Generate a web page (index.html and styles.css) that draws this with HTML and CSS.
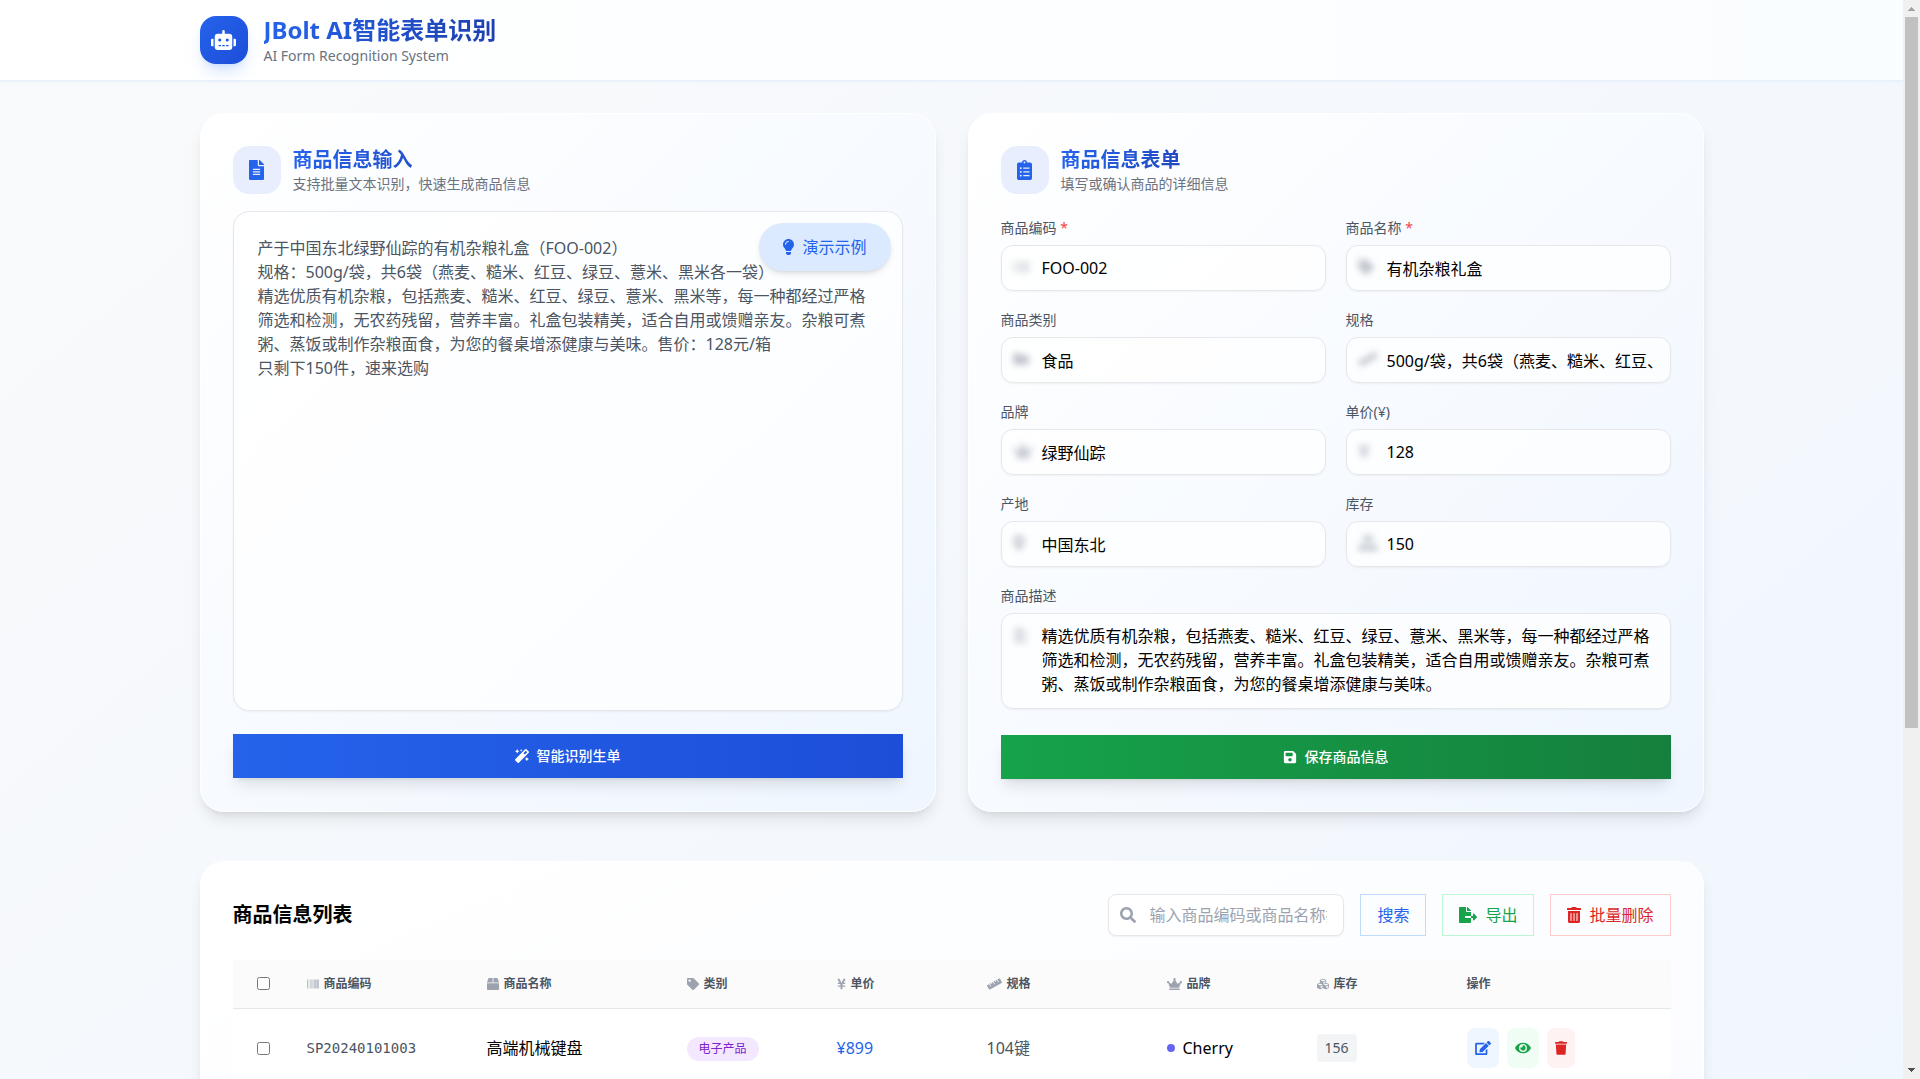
FILE: index.html
```html
<!DOCTYPE html>
<html lang="zh-CN">
<head>
<meta charset="UTF-8">
<meta name="viewport" content="width=device-width, initial-scale=1">
<title>JBolt AI智能表单识别</title>
<link rel="stylesheet" href="styles.css">
</head>
<body>
<svg class="sprite" aria-hidden="true">
  <symbol id="robot" viewBox="0 0 640 512"><path d="M32,224H64V416H32A31.96,31.96,0,0,1,0,384V256A31.96,31.96,0,0,1,32,224Zm512-48V448a64.06,64.06,0,0,1-64,64H160a64.06,64.06,0,0,1-64-64V176a79.974,79.974,0,0,1,80-80H288V32a32,32,0,0,1,64,0V96H464A79.974,79.974,0,0,1,544,176ZM264,256a40,40,0,1,0-40,40A39.997,39.997,0,0,0,264,256Zm-8,128H192v32h64Zm96,0H288v32h64ZM456,256a40,40,0,1,0-40,40A39.997,39.997,0,0,0,456,256Zm-8,128H384v32h64ZM640,256V384a31.96,31.96,0,0,1-32,32H576V224h32A31.96,31.96,0,0,1,640,256Z"/></symbol>
  <symbol id="file" viewBox="0 0 384 512"><path d="M224 136V0H24C10.7 0 0 10.7 0 24v464c0 13.3 10.7 24 24 24h336c13.3 0 24-10.7 24-24V160H248c-13.2 0-24-10.8-24-24zm64 236c0 6.6-5.4 12-12 12H108c-6.6 0-12-5.4-12-12v-8c0-6.6 5.4-12 12-12h168c6.6 0 12 5.4 12 12v8zm0-64c0 6.6-5.4 12-12 12H108c-6.6 0-12-5.4-12-12v-8c0-6.6 5.4-12 12-12h168c6.6 0 12 5.4 12 12v8zm0-72v8c0 6.6-5.4 12-12 12H108c-6.6 0-12-5.4-12-12v-8c0-6.6 5.4-12 12-12h168c6.6 0 12 5.4 12 12zm96-114.1v6.1H256V0h6.1c6.4 0 12.5 2.5 17 7l97.9 98c4.5 4.5 7 10.6 7 16.9z"/></symbol>
  <symbol id="clipboard" viewBox="0 0 384 512"><path d="M336 64h-80c0-35.3-28.7-64-64-64s-64 28.7-64 64H48C21.5 64 0 85.5 0 112v352c0 26.5 21.5 48 48 48h288c26.5 0 48-21.5 48-48V112c0-26.5-21.5-48-48-48zM96 424c-13.3 0-24-10.7-24-24s10.7-24 24-24 24 10.7 24 24-10.7 24-24 24zm0-96c-13.3 0-24-10.7-24-24s10.7-24 24-24 24 10.7 24 24-10.7 24-24 24zm0-96c-13.3 0-24-10.7-24-24s10.7-24 24-24 24 10.7 24 24-10.7 24-24 24zm96-192c13.3 0 24 10.7 24 24s-10.7 24-24 24-24-10.7-24-24 10.7-24 24-24zm128 368c0 4.4-3.6 8-8 8H168c-4.4 0-8-3.6-8-8v-16c0-4.4 3.6-8 8-8h144c4.4 0 8 3.6 8 8v16zm0-96c0 4.4-3.6 8-8 8H168c-4.4 0-8-3.6-8-8v-16c0-4.4 3.6-8 8-8h144c4.4 0 8 3.6 8 8v16zm0-96c0 4.4-3.6 8-8 8H168c-4.4 0-8-3.6-8-8v-16c0-4.4 3.6-8 8-8h144c4.4 0 8 3.6 8 8v16z"/></symbol>
  <symbol id="bulb" viewBox="0 0 352 512"><path d="M96.06 454.35c.01 6.29 1.87 12.45 5.36 17.69l17.09 25.69a31.99 31.99 0 0 0 26.64 14.28h61.71a31.99 31.99 0 0 0 26.64-14.28l17.09-25.69a31.989 31.989 0 0 0 5.36-17.69l.04-38.35H96.01l.05 38.35zM0 176c0 44.37 16.45 84.85 43.56 115.78 16.52 18.85 42.36 58.23 52.21 91.45.04.26.07.52.11.78h160.24c.04-.26.07-.51.11-.78 9.85-33.22 35.69-72.6 52.21-91.45C335.55 260.85 352 220.37 352 176 352 78.61 272.91-.3 175.45 0 73.44.31 0 82.97 0 176zm176-80c-44.11 0-80 35.89-80 80 0 8.84-7.16 16-16 16s-16-7.16-16-16c0-61.76 50.24-112 112-112 8.84 0 16 7.16 16 16s-7.16 16-16 16z"/></symbol>
  <symbol id="magic" viewBox="0 0 512 512"><path d="M224 96l16-32 32-16-32-16-16-32-16 32-32 16 32 16 16 32zM80 160l26.66-53.33L160 80l-53.34-26.67L80 0 53.34 53.33 0 80l53.34 26.67L80 160zm352 128l-26.66 53.33L352 368l53.34 26.67L432 448l26.66-53.33L512 368l-53.34-26.67L432 288zm70.62-193.77L417.77 9.38C411.53 3.12 403.34 0 395.15 0c-8.19 0-16.38 3.12-22.63 9.38L9.38 372.52c-12.5 12.5-12.5 32.76 0 45.25l84.85 84.85c6.25 6.25 14.44 9.37 22.62 9.37 8.19 0 16.38-3.12 22.63-9.37l363.14-363.15c12.5-12.48 12.5-32.75 0-45.24zM359.45 203.46l-50.91-50.91 86.6-86.6 50.91 50.91-86.6 86.6z"/></symbol>
  <symbol id="save" viewBox="0 0 448 512"><path d="M433.941 129.941l-83.882-83.882A48 48 0 0 0 316.118 32H48C21.49 32 0 53.49 0 80v352c0 26.51 21.49 48 48 48h352c26.51 0 48-21.49 48-48V163.882a48 48 0 0 0-14.059-33.941zM224 416c-35.346 0-64-28.654-64-64 0-35.346 28.654-64 64-64s64 28.654 64 64c0 35.346-28.654 64-64 64zm96-304.52V212c0 6.627-5.373 12-12 12H76c-6.627 0-12-5.373-12-12V108c0-6.627 5.373-12 12-12h228.52c3.183 0 6.235 1.264 8.485 3.515l3.48 3.48A11.996 11.996 0 0 1 320 111.48z"/></symbol>
  <symbol id="search" viewBox="0 0 512 512"><path d="M505 442.7L405.3 343c-4.5-4.5-10.6-7-17-7H372c27.6-35.3 44-79.7 44-128C416 93.1 322.9 0 208 0S0 93.1 0 208s93.1 208 208 208c48.3 0 92.7-16.4 128-44v16.3c0 6.4 2.5 12.5 7 17l99.7 99.7c9.4 9.4 24.6 9.4 33.9 0l28.3-28.3c9.4-9.4 9.4-24.6.1-34zM208 336c-70.7 0-128-57.2-128-128 0-70.7 57.2-128 128-128 70.7 0 128 57.2 128 128 0 70.7-57.2 128-128 128z"/></symbol>
  <symbol id="export" viewBox="0 0 576 512"><path d="M384 121.9c0-6.3-2.5-12.4-7-16.9L279.1 7c-4.5-4.5-10.6-7-17-7H256v128h128zM571 308l-95.7-96.4c-10.1-10.1-27.4-3-27.4 11.3V288h-64v64h64v65.2c0 14.3 17.3 21.4 27.4 11.3L571 332c6.6-6.6 6.6-17.4 0-24zm-379 28v-32c0-8.8 7.2-16 16-16h176V160H248c-13.2 0-24-10.8-24-24V0H24C10.7 0 0 10.7 0 24v464c0 13.3 10.7 24 24 24h336c13.3 0 24-10.7 24-24V352H208c-8.8 0-16-7.2-16-16z"/></symbol>
  <symbol id="trash-lines" viewBox="0 0 448 512"><path d="M32 464a48 48 0 0 0 48 48h288a48 48 0 0 0 48-48V128H32zm272-256a16 16 0 0 1 32 0v224a16 16 0 0 1-32 0zm-96 0a16 16 0 0 1 32 0v224a16 16 0 0 1-32 0zm-96 0a16 16 0 0 1 32 0v224a16 16 0 0 1-32 0zM432 32H312l-9.4-18.7A24 24 0 0 0 281.1 0H166.8a23.72 23.72 0 0 0-21.4 13.3L136 32H16A16 16 0 0 0 0 48v32a16 16 0 0 0 16 16h416a16 16 0 0 0 16-16V48a16 16 0 0 0-16-16z"/></symbol>
  <symbol id="trash" viewBox="0 0 448 512"><path d="M432 32H312l-9.4-18.7A24 24 0 0 0 281.1 0H166.8a23.72 23.72 0 0 0-21.4 13.3L136 32H16A16 16 0 0 0 0 48v32a16 16 0 0 0 16 16h416a16 16 0 0 0 16-16V48a16 16 0 0 0-16-16zM53.2 467a48 48 0 0 0 47.9 45h245.8a48 48 0 0 0 47.9-45L416 128H32z"/></symbol>
  <symbol id="edit" viewBox="0 0 576 512"><path d="M402.6 83.2l90.2 90.2c3.8 3.8 3.8 10 0 13.8L274.4 405.6l-92.8 10.3c-12.4 1.4-22.9-9.1-21.5-21.5l10.3-92.8L388.8 83.2c3.8-3.8 10-3.8 13.8 0zm162-22.9l-48.8-48.8c-15.2-15.2-39.9-15.2-55.2 0l-35.4 35.4c-3.8 3.8-3.8 10 0 13.8l90.2 90.2c3.8 3.8 10 3.8 13.8 0l35.4-35.4c15.2-15.3 15.2-40 0-55.2zM384 346.2V448H64V128h229.8c3.2 0 6.2-1.3 8.5-3.5l40-40c7.6-7.6 2.2-20.5-8.5-20.5H48C21.5 64 0 85.5 0 112v352c0 26.5 21.5 48 48 48h352c26.5 0 48-21.5 48-48V306.2c0-10.7-12.9-16-20.5-8.5l-40 40c-2.2 2.3-3.5 5.3-3.5 8.5z"/></symbol>
  <symbol id="eye" viewBox="0 0 576 512"><path d="M572.52 241.4C518.29 135.59 410.93 64 288 64S57.68 135.64 3.48 241.41a32.35 32.35 0 0 0 0 29.19C57.71 376.41 165.07 448 288 448s230.32-71.64 284.52-177.41a32.35 32.35 0 0 0 0-29.19zM288 400a144 144 0 1 1 144-144 143.93 143.93 0 0 1-144 144zm0-240a95.31 95.31 0 0 0-25.31 3.79 47.85 47.85 0 0 1-66.9 66.9A95.78 95.78 0 1 0 288 160z"/></symbol>
  <symbol id="tag" viewBox="0 0 512 512"><path d="M0 252.118V48C0 21.49 21.49 0 48 0h204.118a48 48 0 0 1 33.941 14.059l211.882 211.882c18.745 18.745 18.745 49.137 0 67.882L293.823 497.941c-18.745 18.745-49.137 18.745-67.882 0L14.059 286.059A48 48 0 0 1 0 252.118zM112 64c-26.51 0-48 21.49-48 48s21.49 48 48 48 48-21.49 48-48-21.49-48-48-48z"/></symbol>
  <symbol id="crown" viewBox="0 0 640 512"><path d="M528 448H112c-8.8 0-16 7.2-16 16v32c0 8.8 7.2 16 16 16h416c8.8 0 16-7.2 16-16v-32c0-8.8-7.2-16-16-16zm64-320c-26.5 0-48 21.5-48 48 0 7.1 1.6 13.7 4.4 19.8L476 239.2c-15.4 9.2-35.3 4-44.2-11.6L350.3 85C361 76.2 368 63 368 48c0-26.5-21.5-48-48-48s-48 21.5-48 48c0 15 7 28.2 17.7 37l-81.5 142.6c-8.9 15.6-28.9 20.8-44.2 11.6l-72.3-43.4c2.7-6 4.4-12.7 4.4-19.8 0-26.5-21.5-48-48-48S0 149.5 0 176s21.5 48 48 48c2.6 0 5.2-.4 7.7-.8L128 416h384l72.3-192.8c2.5.4 5.1.8 7.7.8 26.5 0 48-21.5 48-48s-21.5-48-48-48z"/></symbol>
  <symbol id="box" viewBox="0 0 512 512"><path d="M509.5 184.6L458.9 32.8C452.4 13.2 434.1 0 413.4 0H272v192h238.7c-.4-2.5-.4-5-1.2-7.4zM240 0H98.6c-20.7 0-39 13.2-45.5 32.8L2.5 184.6c-.8 2.4-.8 4.9-1.2 7.4H240V0zM0 224v240c0 26.5 21.5 48 48 48h416c26.5 0 48-21.5 48-48V224H0z"/></symbol>
  <symbol id="barcode" viewBox="0 0 512 512"><path d="M0 448V64h18v384H0zm26.857-.273V64H36v383.727h-9.143zm27.143 0V64h8.857v383.727H54zm44.857 0V64h8.857v383.727h-8.857zm36 0V64h17.714v383.727h-17.714zm44.857 0V64h8.857v383.727h-8.857zm18 0V64h8.857v383.727h-8.857zm18 0V64h8.857v383.727h-8.857zm35.715 0V64h18v383.727h-18zm44.857 0V64h18v383.727h-18zm35.999 0V64h18.001v383.727h-18.001zm36.001 0V64h18.001v383.727h-18.001zm26.857 0V64h18v383.727h-18zm45.143 0V64h26.857v383.727h-26.857zm35.714 0V64h9.143v383.727H476zm18 .273V64h18v384h-18z"/></symbol>
  <symbol id="yen" viewBox="0 0 384 512"><path d="M351.2 32h-65.3c-4.6 0-8.8 2.6-10.8 6.7l-55.4 113.2c-14.5 34.7-27.1 71.9-27.1 71.9h-1.3s-12.6-37.2-27.1-71.9L108.8 38.7c-2-4.1-6.2-6.7-10.8-6.7H32.8c-9.1 0-14.8 9.7-10.6 17.6L102.3 200H44c-6.6 0-12 5.4-12 12v32c0 6.6 5.4 12 12 12h88.2l19.8 37.2V320H44c-6.6 0-12 5.4-12 12v32c0 6.6 5.4 12 12 12h108v92c0 6.6 5.4 12 12 12h56c6.6 0 12-5.4 12-12v-92h108c6.6 0 12-5.4 12-12v-32c0-6.6-5.4-12-12-12H232v-26.8l19.8-37.2H340c6.6 0 12-5.4 12-12v-32c0-6.6-5.4-12-12-12h-58.3l80.1-150.4c4.3-7.9-1.5-17.6-10.6-17.6z"/></symbol>
  <symbol id="ruler" viewBox="0 0 640 512"><path d="M635.7 167.2L556.1 31.7c-8.8-15-28.3-20.1-43.5-11.5l-69 39.1L503.3 161c2.2 3.8.9 8.5-2.9 10.7l-13.8 7.8c-3.8 2.2-8.7.9-10.9-2.9L416 75l-55.2 31.3 27.9 47.4c2.2 3.8.9 8.5-2.9 10.7l-13.8 7.8c-3.8 2.2-8.7.9-10.9-2.9L333.2 122 278 153.3 337.8 255c2.2 3.7.9 8.5-2.9 10.7l-13.8 7.8c-3.8 2.2-8.7.9-10.9-2.9l-59.7-101.7-55.2 31.3 27.9 47.4c2.2 3.8.9 8.5-2.9 10.7l-13.8 7.8c-3.8 2.2-8.7.9-10.9-2.9l-27.9-47.5-55.2 31.3 59.7 101.7c2.2 3.7.9 8.5-2.9 10.7l-13.8 7.8c-3.8 2.2-8.7.9-10.9-2.9L84.9 262.9l-69 39.1C.7 310.7-4.6 329.8 4.2 344.8l79.6 135.6c8.8 15 28.3 20.1 43.5 11.5L624.1 210c15.2-8.6 20.4-27.8 11.6-42.8z"/></symbol>
  <symbol id="cubes" viewBox="0 0 512 512"><path d="M488.6 250.2L392 214V105.5c0-15-9.3-28.4-23.4-33.7l-100-37.5c-8.1-3.1-17.1-3.1-25.3 0l-100 37.5c-14.1 5.3-23.4 18.7-23.4 33.7V214l-96.6 36.2C9.3 255.5 0 268.9 0 283.9V394c0 13.6 7.7 26.1 19.9 32.2l100 50c10.1 5.1 22.1 5.1 32.2 0l103.9-52 103.9 52c10.1 5.1 22.1 5.1 32.2 0l100-50c12.2-6.1 19.9-18.6 19.9-32.2V283.9c0-15-9.3-28.4-23.4-33.7zM358 214.8l-85 31.9v-68.2l85-37v73.3zM154 104.1l102-38.2 102 38.2v.6l-102 41.4-102-41.4v-.6zm84 291.1l-85 42.5v-79.1l85-38.8v75.4zm0-112l-102 41.4-102-41.4v-.6l102-38.2 102 38.2v.6zm240 112l-85 42.5v-79.1l85-38.8v75.4zm0-112l-102 41.4-102-41.4v-.6l102-38.2 102 38.2v.6z"/></symbol>
  <symbol id="folder" viewBox="0 0 512 512"><path d="M464 128H272l-64-64H48C21.500 64 0 85.500 0 112v288c0 26.500 21.500 48 48 48h416c26.500 0 48-21.500 48-48V176c0-26.500-21.500-48-48-48z"/></symbol>
  <symbol id="marker" viewBox="0 0 384 512"><path d="M172.300 501.700C27 291 0 269.400 0 192 0 86 86 0 192 0s192 86 192 192c0 77.400-27 99-172.300 309.700-9.500 13.800-29.900 13.800-39.400 0zM192 272c44.200 0 80-35.800 80-80s-35.800-80-80-80-80 35.800-80 80 35.800 80 80 80z"/></symbol>
  <symbol id="boxes" viewBox="0 0 576 512"><path d="M160 0h96v80h64V0h96c9 0 16 7 16 16v192c0 9-7 16-16 16H160c-9 0-16-7-16-16V16c0-9 7-16 16-16zM16 288h80v80h80v-80h80c9 0 16 7 16 16v192c0 9-7 16-16 16H16c-9 0-16-7-16-16V304c0-9 7-16 16-16zm304 0h80v80h80v-80h80c9 0 16 7 16 16v192c0 9-7 16-16 16H320c-9 0-16-7-16-16V304c0-9 7-16 16-16z"/></symbol>
  <symbol id="lines" viewBox="0 0 448 512"><path d="M0 40h290v70H0zM0 168h448v70H0zM0 296h290v70H0zM0 424h448v70H0z"/></symbol>
</svg>

<div class="shell">
  <div class="page">
    <header class="topbar">
      <div class="container brand">
        <span class="logo"><svg class="icon robot"><use href="#robot"/></svg></span>
        <div>
          <h1 class="brand-title">JBolt AI智能表单识别</h1>
          <p class="subtitle">AI Form Recognition System</p>
        </div>
      </div>
    </header>

    <main class="container content">
      <div class="columns">
        <section class="card">
          <div class="card-head">
            <span class="head-icon"><svg class="icon medium"><use href="#file"/></svg></span>
            <div>
              <h2 class="card-title">商品信息输入</h2>
              <p class="subtitle">支持批量文本识别，快速生成商品信息</p>
            </div>
          </div>
          <div class="source">
            <textarea class="source-text" aria-label="商品信息输入">产于中国东北绿野仙踪的有机杂粮礼盒（FOO-002）
规格：500g/袋，共6袋（燕麦、糙米、红豆、绿豆、薏米、黑米各一袋）
精选优质有机杂粮，包括燕麦、糙米、红豆、绿豆、薏米、黑米等，每一种都经过严格筛选和检测，无农药残留，营养丰富。礼盒包装精美，适合自用或馈赠亲友。杂粮可煮粥、蒸饭或制作杂粮面食，为您的餐桌增添健康与美味。售价：128元/箱
只剩下150件，速来选购</textarea>
            <button class="demo" type="button"><svg class="icon bulb"><use href="#bulb"/></svg>演示示例</button>
          </div>
          <button class="submit blue" type="button"><svg class="icon small"><use href="#magic"/></svg>智能识别生单</button>
        </section>

        <section class="card">
          <div class="card-head">
            <span class="head-icon"><svg class="icon medium"><use href="#clipboard"/></svg></span>
            <div>
              <h2 class="card-title">商品信息表单</h2>
              <p class="subtitle">填写或确认商品的详细信息</p>
            </div>
          </div>
          <form class="form">
            <div class="field"><label for="code">商品编码 <span class="required">*</span></label><div class="control"><svg class="icon hint"><use href="#barcode"/></svg><input id="code" type="text" value="FOO-002"></div></div>
            <div class="field"><label for="name">商品名称 <span class="required">*</span></label><div class="control"><svg class="icon hint"><use href="#tag"/></svg><input id="name" type="text" value="有机杂粮礼盒"></div></div>
            <div class="field"><label for="category">商品类别</label><div class="control"><svg class="icon hint"><use href="#folder"/></svg><input id="category" type="text" value="食品"></div></div>
            <div class="field"><label for="spec">规格</label><div class="control"><svg class="icon hint wide"><use href="#ruler"/></svg><input id="spec" type="text" value="500g/袋，共6袋（燕麦、糙米、红豆、绿豆、薏米、黑米各一袋）"></div></div>
            <div class="field"><label for="brand">品牌</label><div class="control"><svg class="icon hint wide"><use href="#crown"/></svg><input id="brand" type="text" value="绿野仙踪"></div></div>
            <div class="field"><label for="price">单价(¥)</label><div class="control"><svg class="icon hint narrow"><use href="#yen"/></svg><input id="price" type="text" value="128"></div></div>
            <div class="field"><label for="origin">产地</label><div class="control"><svg class="icon hint narrow"><use href="#marker"/></svg><input id="origin" type="text" value="中国东北"></div></div>
            <div class="field"><label for="stock">库存</label><div class="control"><svg class="icon hint wide"><use href="#boxes"/></svg><input id="stock" type="text" value="150"></div></div>
            <div class="field full"><label for="description">商品描述</label><div class="control"><svg class="icon hint"><use href="#lines"/></svg><textarea id="description">精选优质有机杂粮，包括燕麦、糙米、红豆、绿豆、薏米、黑米等，每一种都经过严格筛选和检测，无农药残留，营养丰富。礼盒包装精美，适合自用或馈赠亲友。杂粮可煮粥、蒸饭或制作杂粮面食，为您的餐桌增添健康与美味。</textarea></div></div>
          </form>
          <button class="submit green" type="button"><svg class="icon small"><use href="#save"/></svg>保存商品信息</button>
        </section>
      </div>

      <section class="card list">
        <div class="list-head">
          <h2 class="list-title">商品信息列表</h2>
          <div class="tools">
            <div class="search"><svg class="icon search-icon"><use href="#search"/></svg><input type="text" aria-label="搜索商品" placeholder="输入商品编码或商品名称搜索"></div>
            <button class="tool find" type="button">搜索</button>
            <button class="tool export" type="button"><svg class="icon export-icon"><use href="#export"/></svg>导出</button>
            <button class="tool delete" type="button"><svg class="icon small"><use href="#trash-lines"/></svg>批量删除</button>
          </div>
        </div>
        <table class="table">
          <colgroup><col class="c-check"><col class="c-md"><col class="c-lg"><col class="c-sm"><col class="c-sm"><col class="c-md"><col class="c-sm"><col class="c-sm"><col></colgroup>
          <thead>
            <tr>
              <th><input type="checkbox" aria-label="全选"></th>
              <th><span class="th"><svg class="icon tiny"><use href="#barcode"/></svg>商品编码</span></th>
              <th><span class="th"><svg class="icon tiny"><use href="#box"/></svg>商品名称</span></th>
              <th><span class="th"><svg class="icon tiny"><use href="#tag"/></svg>类别</span></th>
              <th><span class="th"><svg class="icon tiny slim"><use href="#yen"/></svg>单价</span></th>
              <th><span class="th"><svg class="icon tiny broad"><use href="#ruler"/></svg>规格</span></th>
              <th><span class="th"><svg class="icon tiny broad"><use href="#crown"/></svg>品牌</span></th>
              <th><span class="th"><svg class="icon tiny"><use href="#cubes"/></svg>库存</span></th>
              <th><span class="th">操作</span></th>
            </tr>
          </thead>
          <tbody>
            <tr>
              <td><input type="checkbox" aria-label="选择 SP20240101003"></td>
              <td class="mono">SP20240101003</td>
              <td class="strong">高端机械键盘</td>
              <td><span class="badge">电子产品</span></td>
              <td class="price">¥899</td>
              <td>104键</td>
              <td class="strong"><span class="maker">Cherry</span></td>
              <td><span class="count">156</span></td>
              <td><div class="actions">
                <button class="action edit" type="button" aria-label="编辑"><svg class="icon act"><use href="#edit"/></svg></button>
                <button class="action view" type="button" aria-label="查看"><svg class="icon act"><use href="#eye"/></svg></button>
                <button class="action remove" type="button" aria-label="删除"><svg class="icon act thin"><use href="#trash"/></svg></button>
              </div></td>
            </tr>
          </tbody>
        </table>
      </section>
    </main>
  </div>
  <div class="scrollbar" aria-hidden="true">
    <svg class="arrow" viewBox="0 0 7 4"><path d="M3 0h1v1h1v1h1v1h1v1H0V3h1V2h1V1h1z" fill="#a3a3a3"/></svg>
    <div class="track"><div class="thumb"></div></div>
    <svg class="arrow" viewBox="0 0 7 4"><path d="M0 0h7v1H6v1H5v1H4v1H3V3H2V2H1V1H0z" fill="#505050"/></svg>
  </div>
</div>
</body>
</html>
```
FILE: styles.css
```css
* { box-sizing: border-box; margin: 0; }

body, button, input, textarea {
  font-family: "Noto Sans", "Noto Sans CJK SC", sans-serif;
  font-size: 16px;
  line-height: 24px;
}

body { color: #000; }
h1, h2, p { font-weight: 400; }
button { cursor: pointer; border: 0; padding: 0; }

.sprite { display: none; }
.icon { display: block; flex: none; width: 16px; height: 16px; fill: currentColor; }
.icon.robot { width: 25px; height: 20px; }
.icon.medium { width: 15px; height: 20px; }
.icon.small { width: 14px; height: 14px; }
.icon.bulb { width: 11px; }
.icon.export-icon { width: 18px; }
.icon.tiny { width: 12px; height: 12px; color: #9ca3af; }
.icon.slim { width: 9px; }
.icon.broad { width: 15px; }
.icon.act { width: 16px; height: 14px; }
.icon.thin { width: 12px; }

.shell { display: flex; height: 100vh; overflow: hidden; }
.page {
  flex: 1;
  min-width: 0;
  overflow: hidden;
  background: linear-gradient(to bottom right, #f9fafb, #eff6ff) 0 0 / 100% 1579px;
}
.container { max-width: 1536px; margin: 0 auto; padding: 0 16px; }

/* Header */
.topbar {
  padding: 14px 0;
  background: linear-gradient(to right, #fff, #fafdff);
  border-bottom: 1px solid #e8f0fb;
  box-shadow: 0 1px 2px rgba(59, 130, 246, .06);
}
.brand { display: flex; align-items: center; gap: 16px; }
.logo {
  display: grid;
  place-items: center;
  width: 48px;
  height: 48px;
  border-radius: 16px;
  color: #fff;
  background: linear-gradient(to bottom right, #2563eb, #1d4ed8);
  box-shadow: 0 10px 15px -3px rgba(59, 130, 246, .2), 0 4px 6px -4px rgba(59, 130, 246, .2);
}
.brand-title, .card-title {
  font-weight: 700;
  color: transparent;
  background: linear-gradient(to right, #2563eb, #1e40af);
  background-clip: text;
}
.brand-title { font-size: 24px; line-height: 32px; }
.card-title { font-size: 20px; line-height: 28px; }
.subtitle { font-size: 14px; line-height: 20px; color: #6b7280; }

/* Cards */
.content { padding-top: 32px; }
.columns { display: grid; grid-template-columns: 1fr 1fr; gap: 32px; margin-bottom: 49px; }
.card {
  display: flex;
  flex-direction: column;
  min-width: 0;
  padding: 32px;
  border: 1px solid rgba(255, 255, 255, .8);
  border-radius: 24px;
  background: linear-gradient(to bottom right, #fff, #eff6ff) border-box;
  box-shadow: 0 10px 15px -3px rgba(0, 0, 0, .1), 0 4px 6px -4px rgba(0, 0, 0, .1);
}
.card-head { display: flex; align-items: center; gap: 12px; }
.head-icon {
  display: grid;
  place-items: center;
  width: 48px;
  height: 48px;
  border-radius: 16px;
  color: #2563eb;
  background: #e8eefd;
}

textarea { display: block; resize: none; overflow: hidden; outline: 0; width: 100%; }
.source { position: relative; margin: 17px 0 23px; }
.source-text {
  height: 500px;
  padding: 24px;
  border: 1px solid #e5e7eb;
  border-radius: 16px;
  color: #4b5563;
  background: rgba(255, 255, 255, .7);
  box-shadow: 0 1px 2px rgba(0, 0, 0, .05);
}
.demo {
  position: absolute;
  top: 12px;
  right: 12px;
  display: flex;
  align-items: center;
  gap: 8px;
  padding: 12px 24px;
  border-radius: 24px;
  color: #2563eb;
  background: #dbeafe;
  box-shadow: 0 4px 6px -1px rgba(0, 0, 0, .1), 0 2px 4px -2px rgba(0, 0, 0, .1);
}
.submit {
  display: flex;
  align-items: center;
  justify-content: center;
  gap: 8px;
  padding: 12px;
  font-size: 14px;
  line-height: 20px;
  font-weight: 500;
  color: #fff;
  box-shadow: 0 10px 15px -3px rgba(0, 0, 0, .1), 0 4px 6px -4px rgba(0, 0, 0, .1);
}
.blue { background: linear-gradient(to right, #2563eb, #1d4ed8); }
.green { background: linear-gradient(to right, #16a34a, #15803d); }

/* Product form */
.form { display: grid; grid-template-columns: 1fr 1fr; gap: 19px 20px; margin: 24px 0 26px; }
.field { display: flex; flex-direction: column; gap: 7px; min-width: 0; }
.field.full { grid-column: 1 / -1; }
.field label { font-size: 14px; line-height: 20px; color: #4b5563; }
.required { color: #ef4444; }
.control { position: relative; }
.control input, .control textarea {
  display: block;
  width: 100%;
  height: 46px;
  padding: 10px 16px 10px 40px;
  border: 1px solid #e5e7eb;
  border-radius: 12px;
  outline: 0;
  color: #000;
  background: rgba(255, 255, 255, .7);
  box-shadow: 0 1px 2px rgba(0, 0, 0, .05);
}
.control textarea { height: 96px; }
.hint {
  position: absolute;
  top: 14px;
  left: 12px;
  color: #9ca3af;
  opacity: .6;
  filter: blur(3px);
}
.hint.wide { width: 20px; }
.hint.narrow { width: 12px; }

/* Product list */
.list {
  min-height: 660px;
  background: linear-gradient(to bottom right, #fff, #f8fbff) border-box;
}
.list-head { display: flex; align-items: center; justify-content: space-between; margin-bottom: 24px; }
.list-title { font-size: 20px; line-height: 28px; font-weight: 700; }
.tools { display: flex; gap: 16px; }
.search { position: relative; width: 236px; }
.search input {
  width: 100%;
  height: 42px;
  padding: 8px 16px 8px 40px;
  border: 1px solid #e5e7eb;
  border-radius: 8px;
  outline: 0;
  background: #fff;
  box-shadow: 0 1px 2px rgba(0, 0, 0, .05);
}
.search input::placeholder { color: #9ca3af; opacity: 1; }
.search-icon { position: absolute; top: 13px; left: 12px; color: #9ca3af; }
.tool {
  display: flex;
  align-items: center;
  gap: 8px;
  padding: 8px 16px;
  border: 1px solid;
  background: transparent;
}
.tool .small { height: 16px; }
.find { color: #2563eb; border-color: #bfdbfe; }
.export { color: #16a34a; border-color: #bbf7d0; }
.delete { color: #dc2626; border-color: #fecaca; }

.table { width: 100%; table-layout: fixed; border-collapse: collapse; background: #fff; }
.c-check { width: 50px; }
.c-sm { width: 150px; }
.c-md { width: 180px; }
.c-lg { width: 200px; }
.table th, .table td { padding: 0 0 0 24px; text-align: left; vertical-align: middle; white-space: nowrap; }
.table th { height: 48px; background: #fbfbfb; border-bottom: 1px solid #e5e7eb; }
.table td { height: 80px; color: #4b5563; }
.table td.strong { color: #000; }
.table td.price { color: #2563eb; }
.table td.mono { font-family: "DejaVu Sans Mono", monospace; font-size: 14px; }
.table input { display: block; width: 13px; height: 13px; margin: 0; }
.th { display: flex; align-items: center; gap: 5px; font-size: 12px; line-height: 16px; font-weight: 700; color: #4b5563; }
.badge {
  display: inline-block;
  padding: 4px 12px;
  border-radius: 12px;
  font-size: 12px;
  line-height: 16px;
  color: #7e22ce;
  background: #f3e8ff;
}
.count {
  display: inline-block;
  padding: 4px 8px;
  border-radius: 4px;
  font-size: 14px;
  line-height: 20px;
  background: #f3f4f6;
}
.maker { display: flex; align-items: center; gap: 8px; }
.maker::before { content: ""; width: 8px; height: 8px; border-radius: 50%; background: #6366f1; }
.actions { display: flex; gap: 8px; }
.action { display: grid; place-items: center; height: 40px; padding: 0 8px; border-radius: 8px; }
.action.edit { color: #2563eb; background: #eff6ff; }
.action.view { color: #16a34a; background: #f0fdf4; }
.action.remove { color: #dc2626; background: #fef2f2; }

/* Window scrollbar */
.scrollbar {
  display: flex;
  flex-direction: column;
  align-items: center;
  width: 17px;
  padding: 7px 0;
  background: #f0f0f0;
}
.arrow { width: 7px; height: 4px; }
.track { flex: 1; width: 13px; padding: 6px 0; }
.thumb { height: 68%; background: #c1c1c1; }
```
